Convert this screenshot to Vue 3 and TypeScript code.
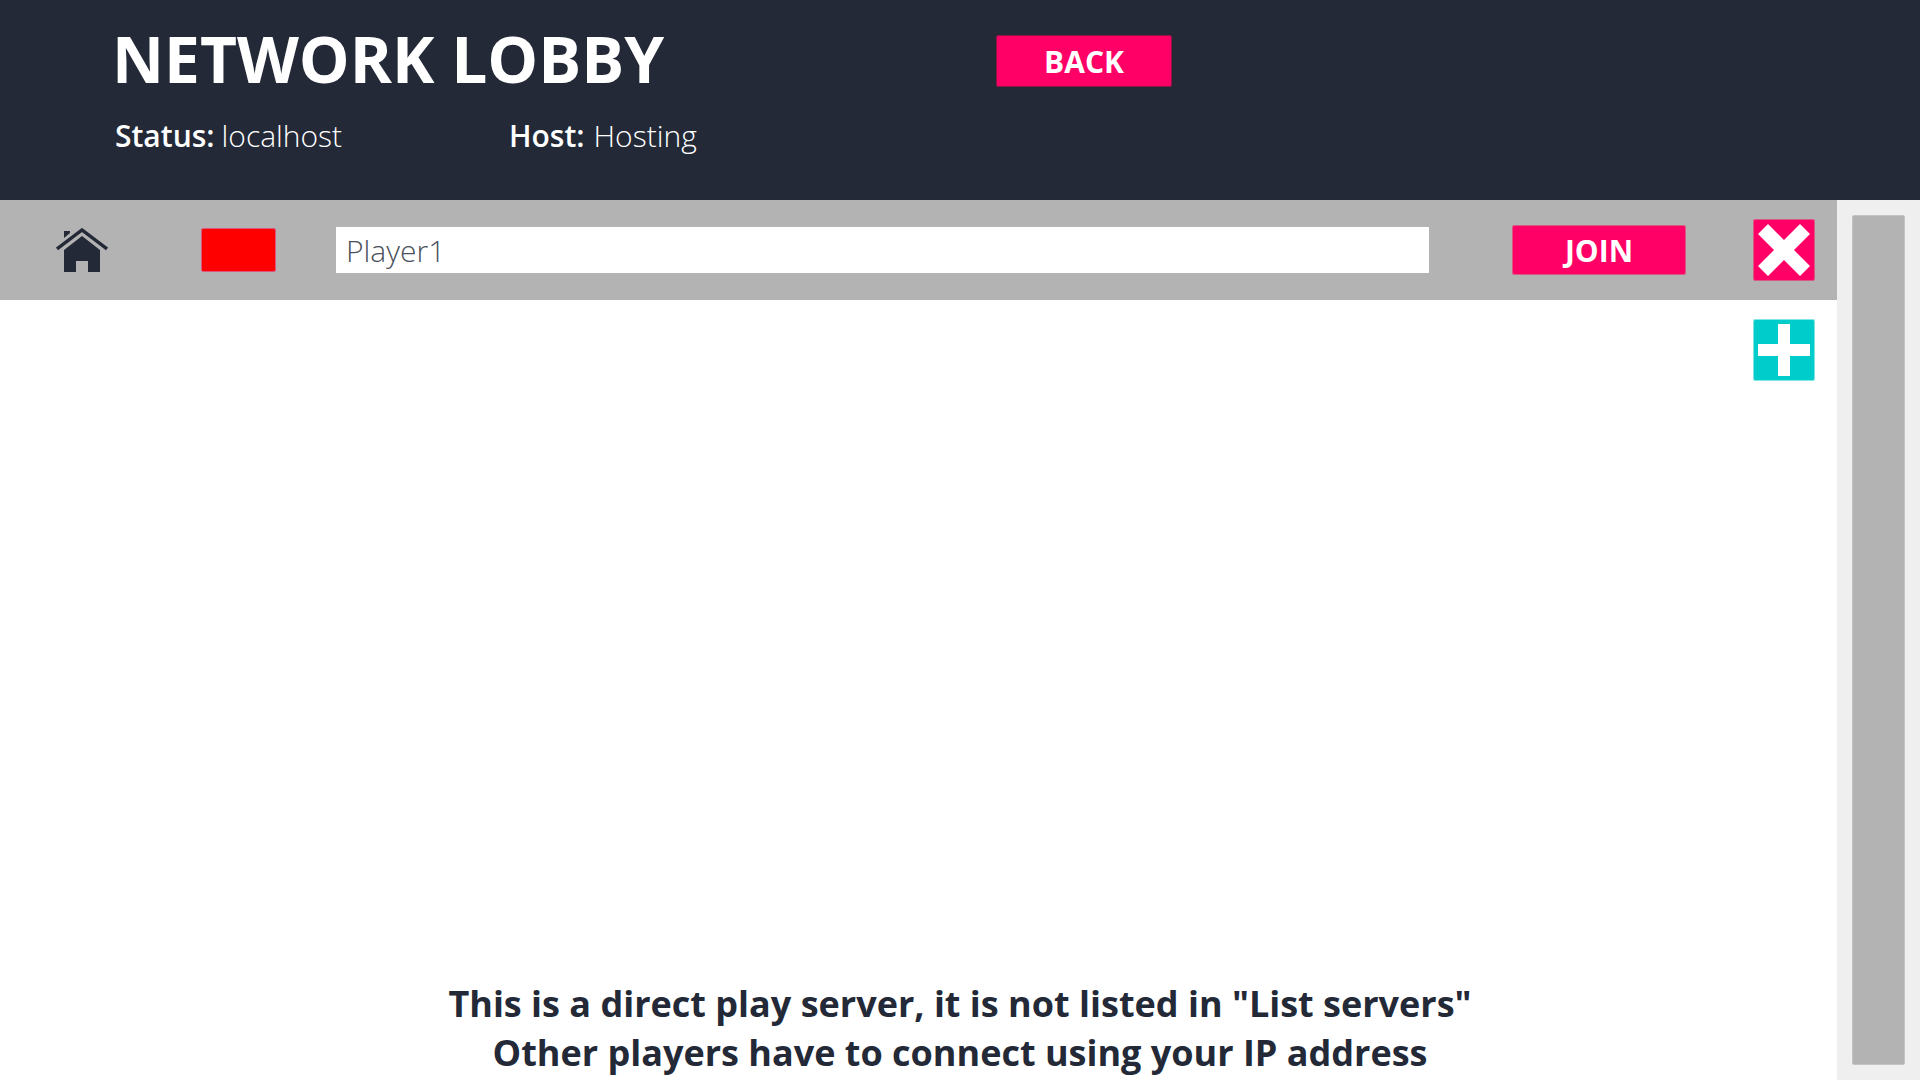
<script setup lang="ts">
import { ref } from 'vue'

interface Player {
  id: number
  name: string
  color: string
}

const status = ref('localhost')
const host = ref('Hosting')
const players = ref<Player[]>([{ id: 1, name: 'Player1', color: '#ff0000' }])
</script>

<template>
  <div class="lobby">
    <header class="header">
      <div class="title-row">
        <h1 class="title">NETWORK LOBBY</h1>
        <button class="btn back" type="button">BACK</button>
      </div>
      <dl class="info">
        <div class="info-item status">
          <dt>Status:</dt>
          <dd>{{ status }}</dd>
        </div>
        <div class="info-item host">
          <dt>Host:</dt>
          <dd>{{ host }}</dd>
        </div>
      </dl>
    </header>

    <div class="body">
      <main class="content">
        <div v-for="player in players" :key="player.id" class="player">
          <svg class="home" viewBox="0 0 52 44" aria-hidden="true">
            <path d="M8 3H14V5L8 10Z" />
            <path d="M26 8L44 22V44H32V33H20V44H8V22Z" />
            <path class="roof" d="M1 21L26 2L51 21" />
          </svg>
          <button
            class="swatch"
            type="button"
            aria-label="Player colour"
            :style="{ backgroundColor: player.color }"
          ></button>
          <input v-model="player.name" class="name" type="text" aria-label="Player name" />
          <button class="btn join" type="button">JOIN</button>
          <button class="icon-btn remove" type="button" aria-label="Remove player">
            <svg viewBox="0 0 52 52" aria-hidden="true">
              <path d="M10 0L26 16L42 0L52 10L36 26L52 42L42 52L26 36L10 52L0 42L16 26L0 10Z" />
            </svg>
          </button>
        </div>
        <div class="add-row">
          <button class="icon-btn add" type="button" aria-label="Add player">
            <svg viewBox="0 0 52 52" aria-hidden="true">
              <path d="M20 0H32V20H52V32H32V52H20V32H0V20H20Z" />
            </svg>
          </button>
        </div>
        <p class="notice">
          This is a direct play server, it is not listed in "List servers"<br />
          Other players have to connect using your IP address
        </p>
      </main>
      <div class="scrollbar">
        <div class="thumb"></div>
      </div>
    </div>
  </div>
</template>

<style>
body {
  margin: 0;
  background: #ffffff;
}
</style>

<style scoped>
.lobby {
  display: flex;
  flex-direction: column;
  min-height: 100vh;
  background: #ffffff;
  color: #232937;
  font-family: 'Open Sans', 'Noto Sans', sans-serif;
  font-size: 30px;
  line-height: 40px;
}

.lobby *,
.lobby {
  box-sizing: border-box;
}

.header {
  padding: 15px 112px 44px 112px;
  background: #232937;
  color: #ffffff;
}

.title-row {
  display: flex;
  align-items: flex-start;
  height: 88px;
}

.title {
  flex: 0 0 884px;
  margin: 0;
  font-size: 64px;
  font-weight: 700;
  line-height: 88px;
}

.info {
  display: flex;
  margin: 13px 0 0;
  padding-left: 3px;
}

.info-item {
  display: flex;
}

.status {
  flex: 0 0 394px;
  gap: 7px;
}

.host {
  gap: 9px;
}

dt {
  font-weight: 600;
}

dd {
  margin: 0;
  font-weight: 300;
}

.btn,
.swatch,
.icon-btn {
  border: 1px solid rgba(255, 0, 80, 0.5);
  border-radius: 2px;
  background-clip: padding-box;
}

.btn {
  padding: 2px 0 0;
  background-color: #ff0066;
  color: #ffffff;
  font: inherit;
  font-weight: 700;
}

.back {
  width: 176px;
  height: 52px;
  margin-top: 20px;
}

.body {
  display: flex;
  flex: 1;
}

.content {
  display: flex;
  flex: 1;
  flex-direction: column;
  min-width: 0;
}

.player {
  display: flex;
  align-items: center;
  height: 100px;
  padding: 0 22px 0 56px;
  background: #b3b3b3;
}

.home {
  width: 52px;
  height: 44px;
  margin-right: 93px;
  fill: #232937;
}

.roof {
  fill: none;
  stroke: #232937;
  stroke-width: 3.4;
}

.swatch {
  width: 75px;
  height: 44px;
  margin-right: 60px;
  padding: 0;
}

.name {
  flex: 1;
  min-width: 0;
  height: 46px;
  margin-right: 83px;
  padding: 0 10px;
  border: 0;
  border-radius: 0;
  outline: 0;
  background: #ffffff;
  color: #4b505b;
  font: inherit;
  font-weight: 300;
}

.join {
  width: 174px;
  height: 50px;
  margin-right: 67px;
}

.icon-btn {
  display: flex;
  align-items: center;
  justify-content: center;
  width: 62px;
  height: 62px;
  padding: 0;
}

.icon-btn svg {
  width: 52px;
  height: 52px;
  fill: #ffffff;
}

.remove {
  background-color: #ff0066;
}

.add {
  border-color: rgba(0, 204, 204, 0.5);
  background-color: #00cccc;
}

.add-row {
  display: flex;
  align-items: center;
  justify-content: flex-end;
  height: 100px;
  padding-right: 22px;
}

.notice {
  margin: auto 0 0;
  padding: 0 0 3px 83px;
  font-size: 36px;
  font-weight: 700;
  line-height: 49px;
  text-align: center;
}

.scrollbar {
  display: flex;
  width: 83px;
  padding: 15px;
  border: 0 solid #f8f8f8;
  background: #efefef;
}

.thumb {
  flex: 1;
  border: 1px solid #c4c4c4;
  border-radius: 2px;
  background: #b3b3b3;
}
</style>
